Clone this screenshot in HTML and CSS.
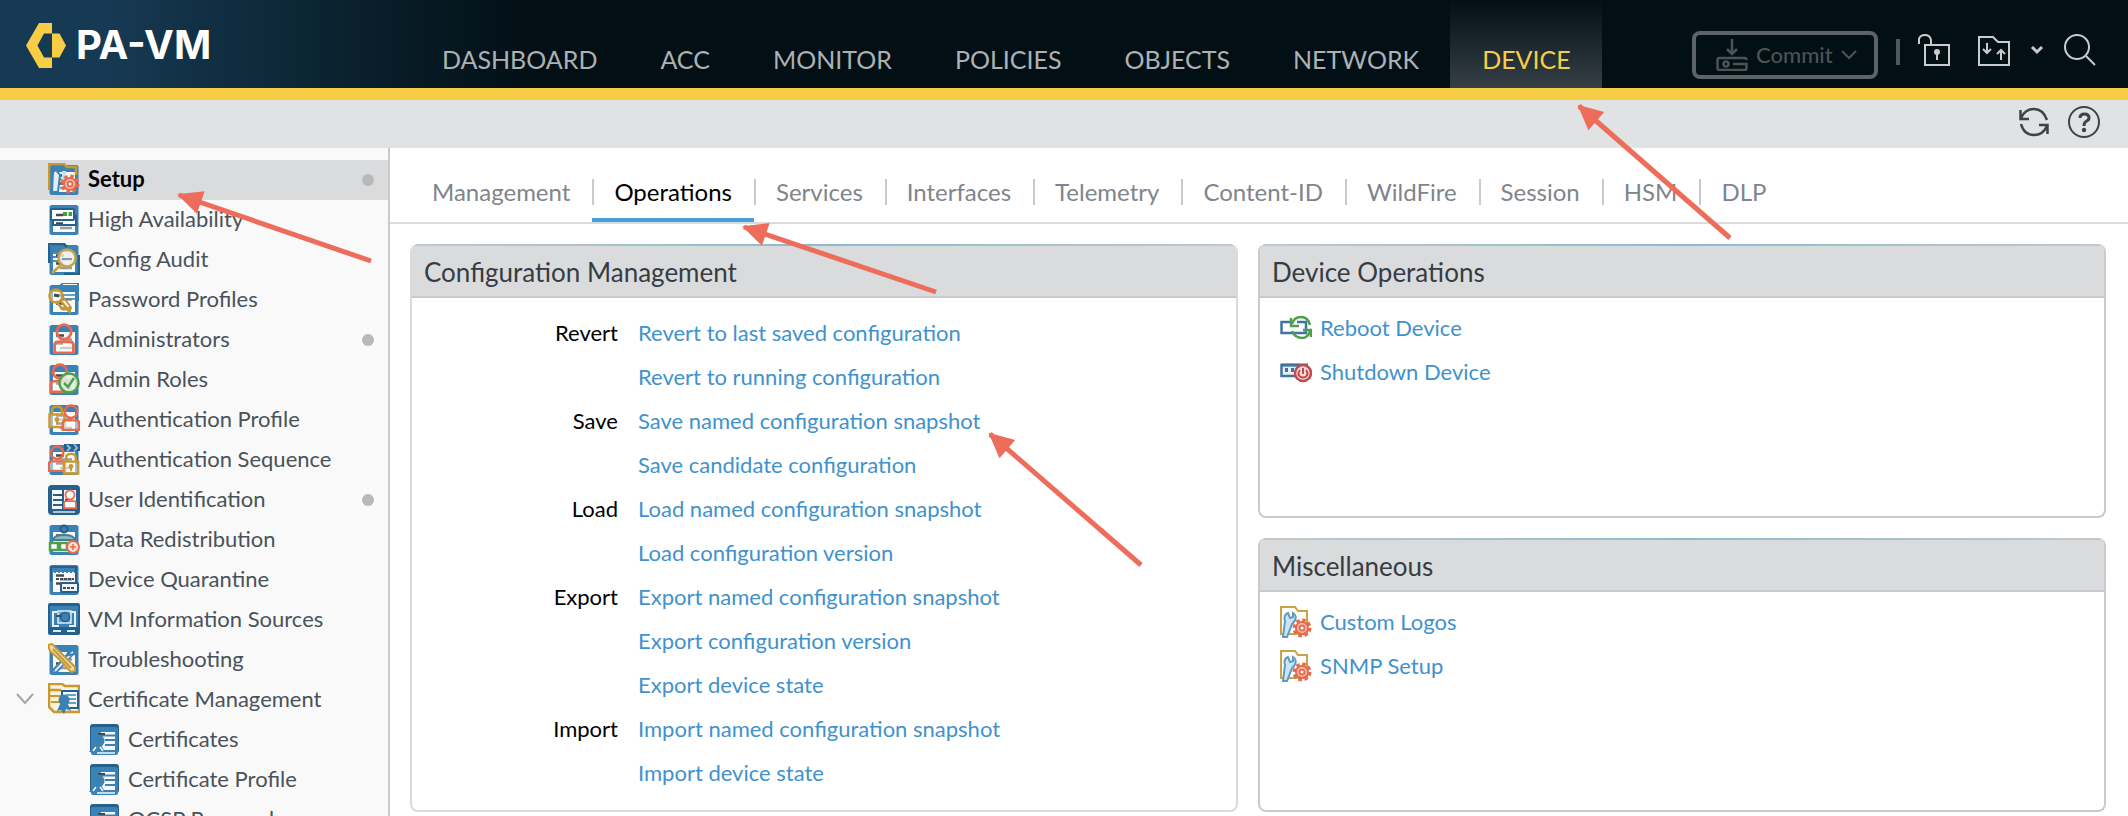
FILE: index.html
```html
<!DOCTYPE html>
<html lang="en">
<head>
<meta charset="utf-8">
<title>PA-VM</title>
<link rel="stylesheet" href="styles.css">
</head>
<body>
<svg class="defs" aria-hidden="true">
  <symbol id="doc" viewBox="0 0 32 32">
    <rect x="1.500" y="2" width="29" height="30" rx="2.500" fill="#3a82b5"/>
    <path d="M5 9H27V29H5Z" fill="#fafafa"/>
    <path d="M8 12.500H16M8 20.500H15" stroke="#454b50" stroke-width="2.500"/>
    <path d="M12 16.500H24M12 25H24" stroke="#9a9da0" stroke-width="2.500"/>
  </symbol>
  <symbol id="gear" viewBox="0 0 20 20">
    <circle cx="10" cy="10" r="7.500" fill="none" stroke="#e9694c" stroke-width="4" stroke-dasharray="3.400 2.490"/>
    <circle cx="10" cy="10" r="6" fill="#f5c4b7" stroke="#e9694c" stroke-width="2"/>
    <circle cx="10" cy="10" r="2.500" fill="#fff" stroke="#e9694c" stroke-width="2"/>
  </symbol>
  <symbol id="user" viewBox="0 0 20 28">
    <circle cx="10" cy="8" r="6.500" fill="none" stroke="#e9694c" stroke-width="2.500"/>
    <path d="M1.500 27V20Q1.500 17 4.500 17H15.500Q18.500 17 18.500 20V27Z" fill="#fff" fill-opacity=".5" stroke="#e9694c" stroke-width="2.500"/>
  </symbol>
  <symbol id="lock" viewBox="0 0 18 24">
    <path d="M4 10V6Q4 2 9 2T14 6V10" fill="none" stroke="#c9992f" stroke-width="2.500"/>
    <path d="M1.500 10H16.500V22.500H1.500Z" fill="#fff" fill-opacity=".5" stroke="#c9992f" stroke-width="2.500"/>
    <circle cx="9" cy="15" r="2.500" fill="#c9992f"/><path d="M9 15V20" stroke="#c9992f" stroke-width="2"/>
  </symbol>
  <symbol id="cert" viewBox="0 0 32 32">
    <rect x="2" y="1" width="29" height="29" rx="3" fill="#25618c"/>
    <rect x="3" y="4" width="27" height="28" rx="2" fill="#3a82b5"/>
    <path d="M13 9H27V27H13Z" fill="#f5f8fa"/>
    <path d="M13 12.500H27M17 17H27M17 22H27" stroke="#3a82b5" stroke-width="2"/>
    <path d="M10 11H17M13 15V19" stroke="#3f4850" stroke-width="2"/>
    <circle cx="10" cy="18" r="6.500" fill="#3a82b5"/>
    <path d="M6 22L1 29L5 29L6 32L11 25L15 31L16 27L13 22Z" fill="#3a82b5"/>
    <path d="M5 28L8 24M12 24L15 28M9 30H27" stroke="#f5f8fa" stroke-width="1.500"/>
  </symbol>
  <symbol id="i-setup" viewBox="0 0 32 32">
    <use href="#doc"/>
    <path d="M1 27V1H16L19 4H28V12" fill="none" stroke="#c9992f" stroke-width="2.500"/>
    <path d="M5 9L8 7L12 12L10 29H4Z" fill="#e1eef6" stroke="#3a82b5" stroke-width="2"/>
    <path d="M11 8H18V15L14 17V8" fill="#c9dfed"/>
    <use href="#gear" x="12" y="11" width="20" height="20"/>
  </symbol>
  <symbol id="i-ha" viewBox="0 0 32 32">
    <use href="#doc"/>
    <rect x="3" y="6" width="23" height="11" rx="1" fill="#fff" stroke="#25618c" stroke-width="2"/>
    <path d="M8 12H15" stroke="#454b50" stroke-width="2.500"/>
    <path d="M15 11H19M20.500 11H24" stroke="#3fa142" stroke-width="4"/>
    <path d="M28 12V22H5V18" fill="none" stroke="#25618c" stroke-width="2"/>
  </symbol>
  <symbol id="i-audit" viewBox="0 0 32 32">
    <use href="#doc"/>
    <path d="M1 20V1H16L19 4M31 12V31H16" fill="none" stroke="#25618c" stroke-width="2.500"/>
    <path d="M5 10H14M5 14H12M5 18H10" stroke="#25618c" stroke-width="1.500"/>
    <circle cx="19" cy="15" r="8.500" fill="#e8f0f3" fill-opacity=".8" stroke="#c9a33f" stroke-width="2.500"/>
    <path d="M14 16H24" stroke="#8c969c" stroke-width="2"/>
    <path d="M13 22L4 30" stroke="#c9a33f" stroke-width="3"/>
  </symbol>
  <symbol id="i-pass" viewBox="0 0 32 32">
    <use href="#doc"/>
    <path d="M12 3L15 0H30V18" fill="none" stroke="#3a82b5" stroke-width="2"/>
    <path d="M14 12H28M15 16H28" stroke="#3a82b5" stroke-width="1.500"/>
    <circle cx="8" cy="13" r="6.500" fill="#fff" fill-opacity=".5" stroke="#c9992f" stroke-width="2.500"/>
    <path d="M12 17L21 28M8 18L15 27" stroke="#c9992f" stroke-width="2.500"/>
    <path d="M6 12L11 13" stroke="#454b50" stroke-width="3"/>
    <path d="M15 27L18 26L22 29V23L15 14" fill="none" stroke="#c9992f" stroke-width="2"/>
  </symbol>
  <symbol id="i-admin" viewBox="0 0 32 32">
    <use href="#doc"/><use href="#user" x="4" y="0" width="24" height="31"/>
  </symbol>
  <symbol id="i-roles" viewBox="0 0 32 32">
    <use href="#doc"/><use href="#user" x="0" y="0" width="24" height="30"/>
    <circle cx="21" cy="20" r="9.500" fill="#e2f0e0" fill-opacity=".85" stroke="#4fa04c" stroke-width="2.500"/>
    <path d="M16 20L20 24L26 15" fill="none" stroke="#4fa04c" stroke-width="2.500"/>
  </symbol>
  <symbol id="i-authp" viewBox="0 0 32 32">
    <use href="#doc"/><use href="#lock" x="0" y="1" width="18" height="25"/>
    <use href="#user" x="13" y="1" width="20" height="27"/>
  </symbol>
  <symbol id="i-auths" viewBox="0 0 32 32">
    <use href="#doc"/><path d="M16 1H32V8H16Z" fill="#25618c"/>
    <path d="M19 2L22 5L19 8M26 1L29 5L26 8" fill="none" stroke="#8fbbd8" stroke-width="2"/>
    <use href="#user" x="-1" y="2" width="20" height="27"/>
    <use href="#lock" x="14" y="9" width="18" height="23"/>
  </symbol>
  <symbol id="i-userid" viewBox="0 0 32 32">
    <rect x="0" y="2" width="32" height="30" rx="4" fill="#25618c"/>
    <path d="M4 7H14V26H4ZM16 7H28V26H16Z" fill="#f5f8fa"/>
    <path d="M5 12H14M5 17H14M5 22H14" stroke="#25618c" stroke-width="2"/>
    <path d="M9 12H14M17 17H20" stroke="#454b50" stroke-width="2"/>
    <use href="#user" x="15" y="6" width="14" height="20"/>
    <path d="M5 29H27" stroke="#d9e6ef" stroke-width="1.500"/>
  </symbol>
  <symbol id="i-data" viewBox="0 0 32 32">
    <use href="#doc"/><circle cx="16" cy="6" r="3.500" fill="#3a82b5" stroke="#25618c" stroke-width="2"/>
    <path d="M5 17Q6 12 16 12T27 17Z" fill="#8cb9b9" stroke="#447e95" stroke-width="2"/>
    <path d="M2 20H10V27H2ZM12 20H19V27H12Z" fill="#fff" stroke="#4fa04c" stroke-width="2.500"/>
    <circle cx="25" cy="24" r="6" fill="#f8dfd8" stroke="#e9694c" stroke-width="2"/>
    <path d="M22 24H28M25 21V27" stroke="#e9694c" stroke-width="1.500"/>
  </symbol>
  <symbol id="i-quar" viewBox="0 0 32 32">
    <use href="#doc"/><path d="M3 18V4H28V19" fill="none" stroke="#25618c" stroke-width="2"/>
    <path d="M6 9H27" stroke="#3a82b5" stroke-width="2" stroke-dasharray="2 2"/>
    <rect x="13" y="20" width="17" height="9" rx="1" fill="#eef5f9" stroke="#25618c" stroke-width="2"/>
    <path d="M15 25H27M8 16H26" stroke="#454b50" stroke-width="2" stroke-dasharray="3 1"/>
  </symbol>
  <symbol id="i-vm" viewBox="0 0 32 32">
    <rect x="0" y="0" width="32" height="32" rx="2" fill="#25618c"/><path d="M2 3H30V24H2Z" fill="#3a82b5"/>
    <path d="M9 9H5V23H11M23 9H27V23H21" fill="none" stroke="#e6f0f6" stroke-width="2"/>
    <rect x="10" y="8" width="13" height="12" fill="#62a2cb" stroke="#dcebf4" stroke-width="1.500"/>
    <circle cx="17" cy="14" r="4.500" fill="#3a82b5" stroke="#25618c" stroke-width="1.500"/>
    <path d="M8 13H14" stroke="#454b50" stroke-width="2"/><path d="M5 28H13M19 28H27" stroke="#dcebf4" stroke-width="2"/>
  </symbol>
  <symbol id="i-trouble" viewBox="0 0 32 32">
    <use href="#doc"/>
    <path d="M26 7L6 29" stroke="#3a82b5" stroke-width="6"/><path d="M25 9L7 28" stroke="#e1eef6" stroke-width="2"/>
    <path d="M19 6L21 12L27 11" fill="none" stroke="#3a82b5" stroke-width="2"/>
    <path d="M0 2L4 1L16 13L27 24V28L23 29L12 17L2 8Z" fill="#f1ddb0" stroke="#c9992f" stroke-width="2"/>
    <path d="M5 6L23 25" stroke="#c9992f" stroke-width="2"/>
  </symbol>
  <symbol id="i-certm" viewBox="0 0 32 32">
    <path d="M1 20V1H14L17 3H31V29H6L1 24V7H13" fill="#fbf2da" stroke="#c9992f" stroke-width="2.500"/>
    <path d="M2 13H14M3 19H12" stroke="#c9992f" stroke-width="2"/>
    <path d="M14 8H30V25H14Z" fill="#f5f8fa" stroke="#25618c" stroke-width="2"/>
    <path d="M18 12H28M20 16H28M20 20H28" stroke="#3a82b5" stroke-width="1.500"/>
    <circle cx="16" cy="17" r="5.500" fill="#3a82b5"/>
    <path d="M13 19L9 28L13 27L16 31L18 26L23 28L19 19Z" fill="#3a82b5"/>
  </symbol>
  <symbol id="i-folder" viewBox="0 0 32 32">
    <path d="M1 28V1H15L18 5H27V28Z" fill="#fffdf8" stroke="#c9a34a" stroke-width="2"/>
    <path d="M3 31L5 15Q3 9 8 7L10 12L13 11V7Q18 10 14 16L12 18L7 31Z" fill="#cfe4f1" stroke="#5b9bc6" stroke-width="2"/>
    <use href="#gear" x="12" y="12" width="20" height="20"/>
  </symbol>
  <symbol id="i-reboot" viewBox="0 0 32 32">
    <path d="M12 10H1.500V21H26V10H17" fill="none" stroke="#3f75a3" stroke-width="2.500"/>
    <path d="M12 12Q14 5 21 5Q28 5 30 13M12 19Q15 26 22 26Q28 26 30 19" fill="none" stroke="#4fa04c" stroke-width="2.500"/>
    <path d="M11 6V14H19M31 25V18H23" fill="none" stroke="#4fa04c" stroke-width="2.500"/>
  </symbol>
  <symbol id="i-shut" viewBox="0 0 32 32">
    <path d="M18 20H1.500V9H20" fill="#e9f1f7" stroke="#3f75a3" stroke-width="2.500"/><path d="M1 9H28" stroke="#3f75a3" stroke-width="3"/>
    <path d="M5 14H8M11 14H14" stroke="#3f75a3" stroke-width="4"/>
    <circle cx="23" cy="17" r="8" fill="#f6dddd" stroke="#c3494c" stroke-width="2.500"/>
    <path d="M20 14Q17 18 20 20.500Q23 22.500 26 20.500Q29 18 26 14M23 12V18" fill="none" stroke="#c3494c" stroke-width="2"/>
  </symbol>
</svg>

<header class="topbar">
  <a class="brand" href="#">
    <svg width="40" height="45" viewBox="0 0 40 45" aria-hidden="true"><path d="M13 0H26V10.500H18L11.500 22.500L18 34.500H26V45H13L0 22.500Z" fill="#f7cd46"/><path d="M26 10.500H33.500L40 22.500L33.500 34.500H26Z" fill="#f7cd46"/></svg>
    <span>PA-VM</span>
  </a>
  <nav class="mainnav">
    <a href="#">DASHBOARD</a><a href="#">ACC</a><a href="#">MONITOR</a><a href="#">POLICIES</a><a href="#">OBJECTS</a><a href="#">NETWORK</a><a href="#" class="active">DEVICE</a>
  </nav>
  <div class="tools">
    <button class="commit" type="button">
      <svg width="32" height="32" viewBox="0 0 32 32" fill="none" stroke="currentColor" stroke-width="2.500"><path d="M16 0V14M11 10L16 15L21 10M1.500 21Q1.500 19 3.500 19H28.500Q30.500 19 30.500 21M30.500 26V29Q30.500 31 28.500 31H3.500Q1.500 31 1.500 29V20M17 25H30.500V28"/><circle cx="10" cy="25" r="2.500"/></svg>
      <span>Commit</span>
      <svg width="16" height="10" viewBox="0 0 16 10" fill="none" stroke="currentColor" stroke-width="2"><path d="M1 1L8 8L15 1"/></svg>
    </button>
    <span class="rule"></span>
    <button class="tool" type="button" aria-label="Locks">
      <svg width="32" height="32" viewBox="0 0 32 32" fill="none" stroke="currentColor" stroke-width="2"><path d="M7 11H31V31H7ZM1 10V5Q2 1 7 1T13 6V11"/><circle cx="19" cy="18" r="3" fill="currentColor" stroke="none"/><path d="M19 18V26"/></svg>
    </button>
    <button class="tool folder" type="button" aria-label="Changes">
      <svg width="32" height="32" viewBox="0 0 32 32" fill="none" stroke="currentColor" stroke-width="2"><path d="M1 31V3H15L20 8H31V31ZM9 9V19M5 15L9 19L13 15M23 26V16M19 20L23 16L27 20"/></svg>
      <svg width="14" height="10" viewBox="0 0 14 10" fill="none" stroke="currentColor" stroke-width="3"><path d="M2 2L7 7L12 2"/></svg>
    </button>
    <button class="tool" type="button" aria-label="Search">
      <svg width="32" height="32" viewBox="0 0 32 32" fill="none" stroke="currentColor" stroke-width="2"><circle cx="13" cy="13" r="12"/><path d="M22 22L31 31"/></svg>
    </button>
  </div>
</header>

<div class="subbar">
  <button type="button" aria-label="Refresh">
    <svg width="32" height="32" viewBox="0 0 32 32" fill="none" stroke="currentColor" stroke-width="2.500"><path d="M3 12Q7 3 16 3Q25 3 29 14M29 20Q25 29 16 29Q6 29 3 18M2.500 4V13H11M29.500 28V19H21"/></svg>
  </button>
  <button type="button" aria-label="Help">
    <svg width="32" height="32" viewBox="0 0 32 32" fill="none" stroke="currentColor" stroke-width="2"><circle cx="16" cy="16" r="15"/><path d="M12 12Q12 8 16.500 8T21 12Q21 14 18 15.500Q16 16.500 16 20" stroke-width="3"/><circle cx="16" cy="24" r="2.200" fill="currentColor" stroke="none"/></svg>
  </button>
</div>

<div class="layout">
  <aside class="sidebar">
    <a href="#" class="item selected"><svg><use href="#i-setup"/></svg><span>Setup</span><i class="dot"></i></a>
    <a href="#" class="item"><svg><use href="#i-ha"/></svg><span>High Availability</span></a>
    <a href="#" class="item"><svg><use href="#i-audit"/></svg><span>Config Audit</span></a>
    <a href="#" class="item"><svg><use href="#i-pass"/></svg><span>Password Profiles</span></a>
    <a href="#" class="item"><svg><use href="#i-admin"/></svg><span>Administrators</span><i class="dot"></i></a>
    <a href="#" class="item"><svg><use href="#i-roles"/></svg><span>Admin Roles</span></a>
    <a href="#" class="item"><svg><use href="#i-authp"/></svg><span>Authentication Profile</span></a>
    <a href="#" class="item"><svg><use href="#i-auths"/></svg><span>Authentication Sequence</span></a>
    <a href="#" class="item"><svg><use href="#i-userid"/></svg><span>User Identification</span><i class="dot"></i></a>
    <a href="#" class="item"><svg><use href="#i-data"/></svg><span>Data Redistribution</span></a>
    <a href="#" class="item"><svg><use href="#i-quar"/></svg><span>Device Quarantine</span></a>
    <a href="#" class="item"><svg><use href="#i-vm"/></svg><span>VM Information Sources</span></a>
    <a href="#" class="item"><svg><use href="#i-trouble"/></svg><span>Troubleshooting</span></a>
    <a href="#" class="item parent"><svg class="chev" viewBox="0 0 18 12"><path d="M1 1L9 10L17 1" fill="none" stroke="#a3a6a8" stroke-width="2"/></svg><svg><use href="#i-certm"/></svg><span>Certificate Management</span></a>
    <a href="#" class="item child"><svg><use href="#cert"/></svg><span>Certificates</span></a>
    <a href="#" class="item child"><svg><use href="#cert"/></svg><span>Certificate Profile</span></a>
    <a href="#" class="item child"><svg><use href="#cert"/></svg><span>OCSP Responder</span></a>
  </aside>

  <main class="main">
    <nav class="tabs">
      <a href="#"><span>Management</span></a><a href="#" class="active"><span>Operations</span></a><a href="#"><span>Services</span></a><a href="#"><span>Interfaces</span></a><a href="#"><span>Telemetry</span></a><a href="#"><span>Content-ID</span></a><a href="#"><span>WildFire</span></a><a href="#"><span>Session</span></a><a href="#"><span>HSM</span></a><a href="#"><span>DLP</span></a>
    </nav>
    <div class="panels">
      <section class="panel config">
        <h2>Configuration Management</h2>
        <dl class="ops">
          <dt>Revert</dt><dd><a href="#">Revert to last saved configuration</a></dd>
          <dd><a href="#">Revert to running configuration</a></dd>
          <dt>Save</dt><dd><a href="#">Save named configuration snapshot</a></dd>
          <dd><a href="#">Save candidate configuration</a></dd>
          <dt>Load</dt><dd><a href="#">Load named configuration snapshot</a></dd>
          <dd><a href="#">Load configuration version</a></dd>
          <dt>Export</dt><dd><a href="#">Export named configuration snapshot</a></dd>
          <dd><a href="#">Export configuration version</a></dd>
          <dd><a href="#">Export device state</a></dd>
          <dt>Import</dt><dd><a href="#">Import named configuration snapshot</a></dd>
          <dd><a href="#">Import device state</a></dd>
        </dl>
      </section>
      <div class="side">
        <section class="panel">
          <h2>Device Operations</h2>
          <div class="links">
            <a href="#"><svg><use href="#i-reboot"/></svg>Reboot Device</a>
            <a href="#"><svg><use href="#i-shut"/></svg>Shutdown Device</a>
          </div>
        </section>
        <section class="panel">
          <h2>Miscellaneous</h2>
          <div class="links">
            <a href="#"><svg><use href="#i-folder"/></svg>Custom Logos</a>
            <a href="#"><svg><use href="#i-folder"/></svg>SNMP Setup</a>
          </div>
        </section>
      </div>
    </div>
  </main>
</div>

<svg class="arrows" aria-hidden="true">
  <defs><marker id="head" markerUnits="userSpaceOnUse" markerWidth="26" markerHeight="26" refX="2" refY="13" orient="auto"><path d="M0 13L25 1V25Z" fill="#ee6c5a"/></marker></defs>
  <g stroke="#ee6c5a" stroke-width="5">
    <path d="M179 195L371 261" marker-start="url(#head)"/>
    <path d="M744 227L936 292" marker-start="url(#head)"/>
    <path d="M990 434L1141 565" marker-start="url(#head)"/>
    <path d="M1579 106L1730 238" marker-start="url(#head)"/>
  </g>
</svg>
</body>
</html>
```

FILE: styles.css
```css
* { box-sizing: border-box; }
html, body { height: 100%; }
body {
  margin: 0;
  display: flex;
  flex-direction: column;
  position: relative;
  overflow: hidden;
  background: #fff;
  font: 22px/44px Lato, "Liberation Sans", sans-serif;
  color: #000;
}
a { color: inherit; text-decoration: none; }
button { border: 0; padding: 0; background: none; color: inherit; font: inherit; }
svg { display: block; flex: none; }
.defs { position: absolute; width: 0; height: 0; }

.topbar {
  flex: none;
  display: flex;
  height: 100px;
  border-bottom: 12px solid #f7cd46;
  background: linear-gradient(90deg, #173a54 0, #173a54 100px, #0c2533 310px, #020f15 530px);
}
.brand {
  display: flex;
  align-items: center;
  gap: 10px;
  width: 410px;
  padding: 2px 0 0 26px;
  color: #fff;
  font: 700 40px/56px Inter, sans-serif;
}
.mainnav { display: flex; }
.mainnav a {
  padding: 30px 31px 0 32px;
  color: #adb1b3;
  font-size: 25px;
  line-height: 58px;
}
.mainnav .active {
  color: #f7cd46;
  background: linear-gradient(#020f15, #363f46);
}
.tools {
  display: flex;
  align-items: center;
  margin-left: auto;
  padding: 12px 32px 0 0;
  color: #c9cbcc;
}
.commit {
  display: flex;
  align-items: center;
  gap: 8px;
  width: 186px;
  height: 48px;
  margin-top: 10px;
  padding-left: 20px;
  border: 4px solid #5d6467;
  border-radius: 8px;
  color: #4b5356;
  font-size: 22px;
  font-weight: 500;
  line-height: 40px;
}
.rule { width: 4px; height: 26px; margin: 4px 18px 0; background: #50585b; }
.tool { display: flex; align-items: center; }
.folder { gap: 20px; margin: 0 20px 0 28px; }

.subbar {
  flex: none;
  display: flex;
  justify-content: flex-end;
  gap: 18px;
  height: 48px;
  padding: 6px 28px 0 0;
  background: #e1e2e4;
  color: #3f4346;
}
.subbar button { height: 32px; }

.layout { flex: 1; display: flex; min-height: 0; }
.sidebar {
  flex: none;
  width: 390px;
  padding-top: 12px;
  border-right: 2px solid #c8c9cd;
  background: #f9f9f9;
  color: #49525a;
  overflow: hidden;
}
.item {
  display: flex;
  align-items: center;
  gap: 8px;
  height: 40px;
  padding: 0 14px 2px 48px;
  line-height: 38px;
}
.item svg, .links svg { width: 32px; height: 32px; }
.selected { background: #dadbdd; color: #000; font-weight: 700; }
.dot { width: 12px; height: 12px; margin: 2px 0 0 auto; border-radius: 50%; background: #b9b9b9; }
.parent { padding-left: 16px; }
.parent .chev { width: 18px; height: 12px; margin-right: 6px; }
.child { padding-left: 88px; }

.main { flex: 1; min-width: 0; }
.tabs {
  display: flex;
  height: 76px;
  padding: 31px 20px 0;
  border-bottom: 2px solid #dadbdc;
  color: #7f858b;
  font-size: 24px;
}
.tabs a { height: 43px; }
.tabs span {
  display: block;
  padding: 0 22px 0 20px;
  border-left: 2px solid #c6cbce;
  line-height: 26px;
}
.tabs a:first-child span { border-left-color: transparent; }
.tabs .active { color: #000; border-bottom: 4px solid #469fdc; border-radius: 2px 2px 0 0; }

.panels {
  display: grid;
  grid-template-columns: 828fr 848fr;
  gap: 20px;
  padding: 20px 22px 4px 20px;
}
.side { display: flex; flex-direction: column; gap: 20px; }
.side .panel { flex: 1; }
.panel {
  border: 2px solid #c8cacd;
  border-top: 0;
  border-radius: 8px;
  overflow: hidden;
}
.config { border-color: #dadbdc; }
.panel::before {
  content: "";
  display: block;
  height: 2px;
  background: linear-gradient(90deg, #c3c7cb, #8bbcce 50%, #c3c7cb);
}
.panel h2 {
  margin: 0;
  padding: 0 12px;
  height: 52px;
  border-bottom: 2px solid #c8cacd;
  background: #dadbdd;
  color: #363c42;
  font-size: 26px;
  font-weight: 400;
  line-height: 52px;
}
.ops {
  display: grid;
  grid-template-columns: 206px 1fr;
  column-gap: 20px;
  margin: 0;
  padding: 13px 0 15px;
}
.ops dt { text-align: right; }
.ops dd { grid-column: 2; margin: 0; }
.ops a, .links { color: #3f92cd; }
.links { padding: 8px 20px; }
.links a { display: flex; align-items: center; gap: 8px; }

.arrows {
  position: absolute;
  inset: 0;
  width: 100%;
  height: 100%;
  pointer-events: none;
}
```
